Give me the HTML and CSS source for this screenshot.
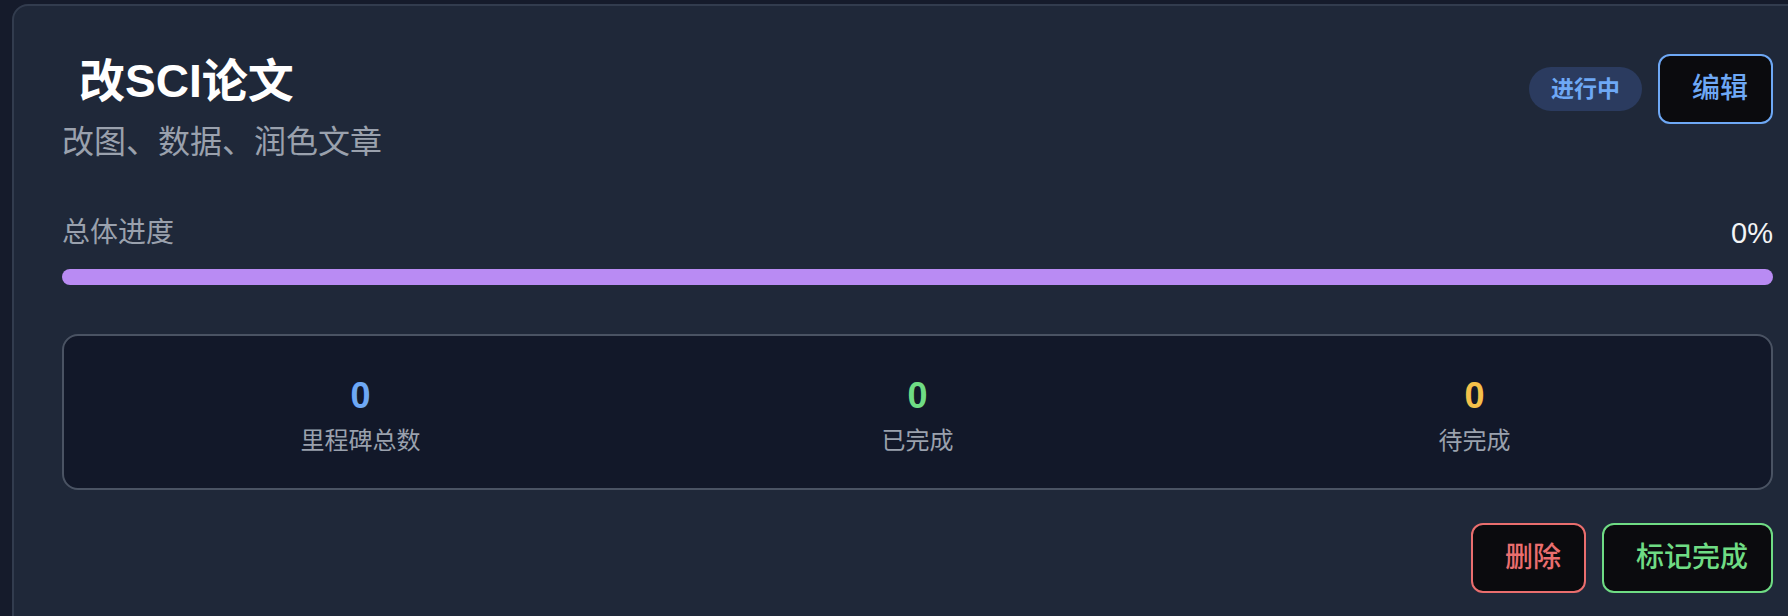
FILE: index.html
```html
<!DOCTYPE html>
<html lang="zh">
<head>
<meta charset="utf-8">
<link rel="stylesheet" href="styles.css">
</head>
<body>
<div class="card">
  <div class="header">
    <div class="titles">
      <h1 class="title">改SCI论文</h1>
      <p class="subtitle">改图、数据、润色文章</p>
    </div>
    <div class="actions">
      <span class="badge">进行中</span>
      <button class="btn btn-blue">编辑</button>
    </div>
  </div>
  <div class="progress">
    <div class="progress-head">
      <span class="progress-label">总体进度</span>
      <span class="progress-value">0%</span>
    </div>
    <div class="bar"></div>
  </div>
  <div class="stats">
    <div class="stat">
      <div class="num num-blue">0</div>
      <div class="stat-label">里程碑总数</div>
    </div>
    <div class="stat">
      <div class="num num-green">0</div>
      <div class="stat-label">已完成</div>
    </div>
    <div class="stat">
      <div class="num num-amber">0</div>
      <div class="stat-label">待完成</div>
    </div>
  </div>
  <div class="footer">
    <button class="btn btn-red">删除</button>
    <button class="btn btn-green">标记完成</button>
  </div>
</div>
</body>
</html>
```
FILE: styles.css
```css
html, body {
  margin: 0;
  padding: 0;
  background: #151b2b;
  overflow: hidden;
}
body {
  font-family: "Liberation Sans", "Noto Sans CJK SC", sans-serif;
  padding: 4px 0 0 12px;
}
.card {
  width: 1711px;
  padding: 48px;
  background: #1f2839;
  border: 2px solid #323c4e;
  border-radius: 16px;
}
.header {
  display: flex;
  justify-content: space-between;
  align-items: flex-start;
}
.title {
  margin: 0;
  padding-left: 17px;
  font-size: 46px;
  line-height: 55px;
  font-weight: 700;
  color: #ffffff;
}
.subtitle {
  margin: 12px 0 0;
  font-size: 32px;
  line-height: 42px;
  color: #9aa1ad;
}
.actions {
  display: flex;
  align-items: center;
  gap: 16px;
}
.badge {
  display: inline-block;
  padding: 6px 22px;
  font-size: 23px;
  line-height: 32px;
  font-weight: 600;
  color: #6ea8f5;
  background: #2b3b5f;
  border-radius: 999px;
}
.btn {
  font-family: inherit;
  font-size: 28px;
  line-height: 38px;
  font-weight: 500;
  padding: 14px 23px 14px 32px;
  background: #0b0b0e;
  border: 2px solid;
  border-radius: 12px;
  cursor: pointer;
}
.btn-blue { color: #6ea8f5; border-color: #6ea8f5; }
.btn-red { color: #ea6e6e; border-color: #ea6e6e; }
.btn-green { color: #6fdc84; border-color: #6fdc84; }
.progress {
  margin-top: 50px;
}
.progress-head {
  display: flex;
  justify-content: space-between;
  align-items: center;
  font-size: 28px;
  line-height: 40px;
}
.progress-label { color: #9aa1ad; }
.progress-value { color: #f3f4f6; font-size: 29px; }
.bar {
  margin-top: 16px;
  height: 16px;
  border-radius: 999px;
  background: #b98bf3;
}
.stats {
  margin-top: 49px;
  display: grid;
  grid-template-columns: repeat(3, 1fr);
  gap: 12px;
  padding: 36px 24px 30px;
  background: #121829;
  border: 2px solid #4a5363;
  border-radius: 16px;
}
.stat {
  display: flex;
  flex-direction: column;
  align-items: center;
}
.num {
  font-size: 36px;
  line-height: 47px;
  font-weight: 700;
}
.num-blue { color: #6ea8f5; }
.num-green { color: #6fdc84; }
.num-amber { color: #f5c04a; }
.stat-label {
  margin-top: 5px;
  font-size: 24px;
  line-height: 34px;
  color: #9aa1ad;
}
.footer {
  margin-top: 33px;
  display: flex;
  justify-content: flex-end;
  gap: 16px;
}
```
